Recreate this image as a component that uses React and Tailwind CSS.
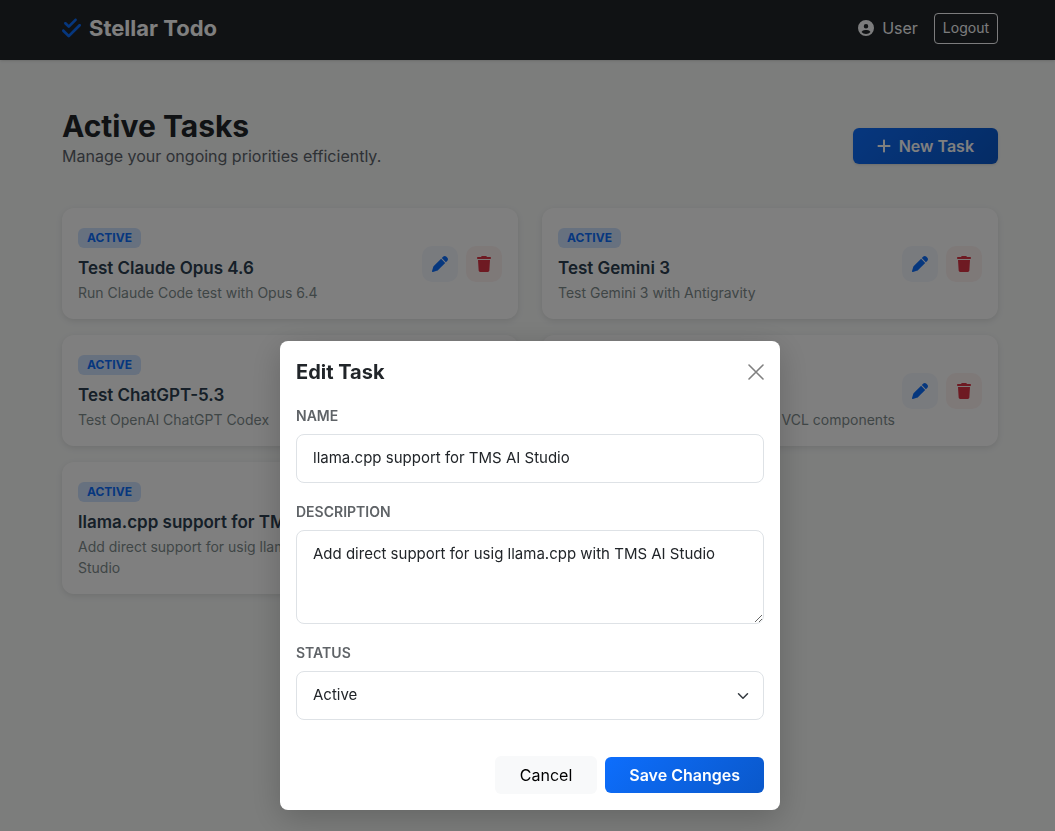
import React, { useState } from 'react';
import { FaCheckDouble, FaCircleUser, FaPen, FaPlus, FaTrash } from 'react-icons/fa6';

const TASKS = [
  { id: 1, name: 'Test Claude Opus 4.6', description: 'Run Claude Code test with Opus 6.4' },
  { id: 2, name: 'Test Gemini 3', description: 'Test Gemini 3 with Antigravity' },
  { id: 3, name: 'Test ChatGPT-5.3', description: 'Test OpenAI ChatGPT Codex' },
  { id: 4, name: 'New VCL components', description: 'Work on the designs of new TMS VCL components' },
  {
    id: 5,
    name: 'llama.cpp support for TMS AI Studio',
    description: 'Add direct support for usig llama.cpp with TMS AI Studio',
  },
];

const labelClass = 'block mb-2 text-sm leading-5 font-semibold uppercase text-[#5f6367]';
const fieldClass =
  'block w-full px-4 rounded-lg border border-[#dee2e6] bg-white text-[15px] leading-6 text-[#212529] outline-none';

const Navbar = () => (
  <nav className="pl-[5px] bg-[#212529] shadow-sm">
    <div className="max-w-[960px] h-15 mx-auto px-3 pb-1 flex items-center justify-between">
      <a href="#" className="flex items-center gap-2 text-[22px] leading-8 font-bold text-white">
        <FaCheckDouble className="w-[19px] h-[22px] text-[#0d6efd]" />
        Stellar Todo
      </a>
      <div className="flex items-center gap-4">
        <span className="flex items-center gap-2 text-base text-[#f8f9fa]">
          <FaCircleUser className="w-4 h-4" />
          User
        </span>
        <button className="h-[31px] px-2 rounded-sm border border-[#f8f9fa] text-sm text-[#f8f9fa]">
          Logout
        </button>
      </div>
    </div>
  </nav>
);

const TaskCard = ({ task }) => (
  <div className="flex items-center justify-between p-4 rounded-xl bg-white shadow-[0_2px_6px_rgba(0,0,0,0.1)]">
    <div className="min-w-0 pt-1">
      <span className="block w-fit mb-2 px-[9px] rounded-md bg-[#cfe2ff] text-xs leading-5 font-bold uppercase text-[#0d6efd]">
        Active
      </span>
      <h2 className="mb-0.5 text-[17px] leading-6 font-semibold text-[#2c3e50]">{task.name}</h2>
      <p className="text-sm leading-[21px] text-[#7f8c8d]">{task.description}</p>
    </div>
    <div className="flex gap-2 shrink-0">
      <button
        aria-label="Edit task"
        className="w-9 h-9 flex items-center justify-center rounded-[10px] bg-[#f3f6fd] text-[#0d6efd]"
      >
        <FaPen className="w-4 h-4" />
      </button>
      <button
        aria-label="Delete task"
        className="w-9 h-9 flex items-center justify-center rounded-[10px] bg-[#fdf2f1] text-[#dc3545]"
      >
        <FaTrash className="w-4 h-4" />
      </button>
    </div>
  </div>
);

const EditTaskModal = ({ task }) => {
  const [name, setName] = useState(task.name);
  const [description, setDescription] = useState(task.description);
  const [status, setStatus] = useState('Active');

  return (
    <div className="fixed inset-0 flex items-end justify-center pl-[5px] pb-[21px] bg-black/50">
      <div
        role="dialog"
        aria-labelledby="edit-title"
        className="w-full max-w-[500px] p-4 rounded-lg bg-white shadow-[0_8px_32px_rgba(0,0,0,0.2)]"
      >
        {/* Header */}
        <div className="flex items-center justify-between mb-[19px]">
          <h2 id="edit-title" className="text-xl leading-[30px] font-bold text-[#212529]">
            Edit Task
          </h2>
          <button aria-label="Close" className="text-[#808080]">
            <svg viewBox="0 0 16 16" className="w-4 h-4" fill="none" stroke="currentColor" strokeWidth="1.6" strokeLinecap="round">
              <path d="M1 1l14 14M15 1L1 15" />
            </svg>
          </button>
        </div>

        {/* Fields */}
        <form className="space-y-[19px]">
          <div>
            <label htmlFor="name" className={labelClass}>Name</label>
            <input
              id="name"
              type="text"
              value={name}
              onChange={(e) => setName(e.target.value)}
              className={`${fieldClass} h-[49px] pb-0.5`}
            />
          </div>
          <div>
            <label htmlFor="description" className={labelClass}>Description</label>
            <textarea
              id="description"
              value={description}
              onChange={(e) => setDescription(e.target.value)}
              className={`${fieldClass} h-[94px] py-[11px]`}
            />
          </div>
          <div>
            <label htmlFor="status" className={labelClass}>Status</label>
            <div className="relative">
              <select
                id="status"
                value={status}
                onChange={(e) => setStatus(e.target.value)}
                className={`${fieldClass} h-[49px] pb-0.5 appearance-none`}
              >
                <option>Active</option>
                <option>Completed</option>
              </select>
              <svg
                viewBox="0 0 16 16"
                className="absolute right-[15px] top-[19px] w-3 h-3 pointer-events-none"
                fill="none"
                stroke="#343a40"
                strokeWidth="2"
                strokeLinecap="round"
                strokeLinejoin="round"
              >
                <path d="m2 5 6 6 6-6" />
              </svg>
            </div>
          </div>
        </form>

        {/* Footer */}
        <div className="flex items-center justify-end gap-2 mt-9">
          <button className="h-[38px] px-[25px] rounded-md bg-[#f8f9fa] text-base text-black">
            Cancel
          </button>
          <button className="h-9 px-6 rounded-md bg-linear-135 from-[#0d6efd] to-[#0a58ca] text-base font-semibold text-white">
            Save Changes
          </button>
        </div>
      </div>
    </div>
  );
};

export default function App() {
  return (
    <div className="min-h-screen bg-[#f8faf9] font-['Inter','Liberation_Sans',sans-serif]">
      <Navbar />
      <main className="pl-[5px]">
        <div className="max-w-[960px] mx-auto px-3 pt-12">
          <div className="flex items-end justify-between mb-10">
            <div>
              <h1 className="text-3xl leading-9 font-bold text-[#212529]">Active Tasks</h1>
              <p className="text-base leading-6 text-[#5c636a]">Manage your ongoing priorities efficiently.</p>
            </div>
            <button className="h-9 mb-1 px-6 flex items-center gap-2 rounded-md bg-linear-135 from-[#0d6efd] to-[#0a58ca] text-base font-semibold text-white shadow-sm">
              <FaPlus className="w-3.5 h-4" />
              New Task
            </button>
          </div>
          <div className="grid grid-cols-2 gap-x-6 gap-y-4">
            {TASKS.map((task) => (
              <TaskCard key={task.id} task={task} />
            ))}
          </div>
        </div>
      </main>
      <EditTaskModal task={TASKS[4]} />
    </div>
  );
}
